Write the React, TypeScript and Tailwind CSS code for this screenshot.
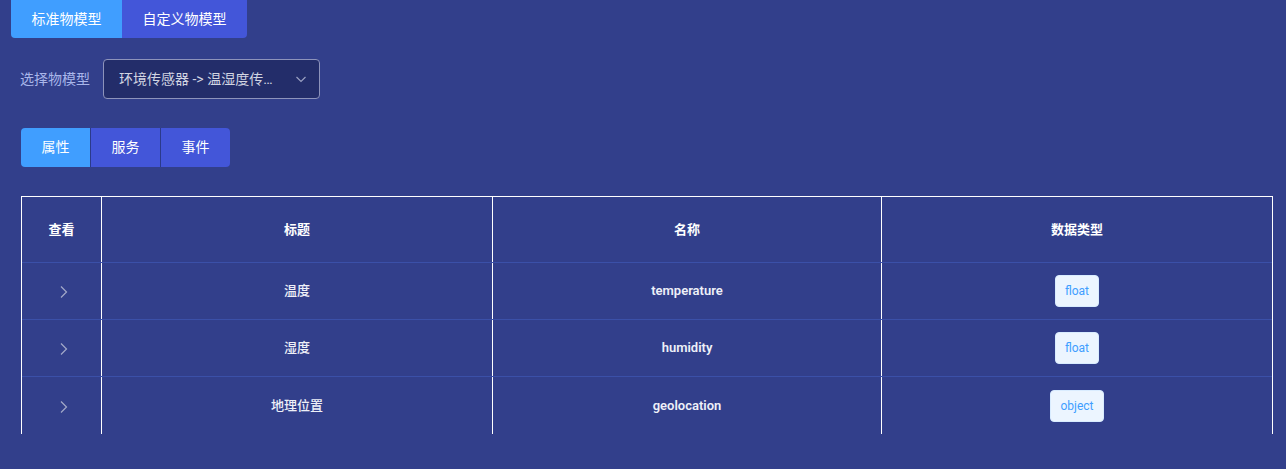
import React from "react";

const rows = [
  { title: "温度", name: "temperature", type: "float" },
  { title: "湿度", name: "humidity", type: "float" },
  { title: "地理位置", name: "geolocation", type: "object" },
];

const font = { fontFamily: "Roboto, 'Noto Sans CJK SC', sans-serif" };

export default function App() {
  return (
    <div className="w-[1286px] h-[469px] overflow-hidden bg-[#323f8b] text-white" style={font}>
      {/* model type switch */}
      <div className="flex pl-[11px]">
        <button className="w-[111px] h-[38px] bg-[#409eff] text-[14px] text-white rounded-bl-[4px]">
          标准物模型
        </button>
        <button className="w-[125px] h-[38px] bg-[#4356d9] text-[14px] text-white rounded-br-[4px]">
          自定义物模型
        </button>
      </div>

      {/* select */}
      <div className="flex items-center mt-[21px] pl-[20px]">
        <span className="text-[14px] text-[#a9b6ea] w-[83px]">选择物模型</span>
        <div className="w-[217px] h-[40px] flex items-center justify-between pl-[15px] pr-[12px] bg-[#232d6a] border border-[#8d93bb] rounded-[4px]">
          <span className="text-[14px] text-[#d2d5e2] truncate">环境传感器 -&gt; 温湿度传…</span>
          <svg width="12" height="12" viewBox="0 0 12 12" fill="none" className="shrink-0">
            <path d="M1.5 4l4.5 4.5L10.5 4" stroke="#9aa0c2" strokeWidth="1.2" />
          </svg>
        </div>
      </div>

      {/* tabs */}
      <div className="flex mt-[29px] ml-[21px] h-[39px] w-[209px] bg-[#2b3a8a] rounded-[4px] overflow-hidden gap-px">
        <div className="w-[69px] flex items-center justify-center bg-[#409eff] text-[14px]">属性</div>
        <div className="w-[69px] flex items-center justify-center bg-[#4356d9] text-[14px]">服务</div>
        <div className="w-[69px] flex items-center justify-center bg-[#4356d9] text-[14px]">事件</div>
      </div>

      {/* table */}
      <div className="mt-[29px] ml-[21px] w-[1252px] border-t border-l border-r border-white">
        <div className="grid grid-cols-[79px_391px_389px_1fr] h-[66px] border-b border-[#3b50a8] text-[13px] font-bold">
          <div className="flex items-center justify-center">查看</div>
          <div className="flex items-center justify-center border-l border-white">标题</div>
          <div className="flex items-center justify-center border-l border-white">名称</div>
          <div className="flex items-center justify-center border-l border-white">数据类型</div>
        </div>
        {rows.map((r, i) => (
          <div
            key={r.name}
            className={`grid grid-cols-[79px_391px_389px_1fr] h-[57px] text-[13px] ${i < rows.length - 1 ? "border-b border-[#3b50a8]" : ""}`}
          >
            <div className="flex items-center justify-center pt-[2px]">
              <svg width="10" height="14" viewBox="0 0 10 14" fill="none" className="ml-[4px]">
                <path d="M2 1.5l5.5 5.5L2 12.5" stroke="#a3a9c9" strokeWidth="1.2" />
              </svg>
            </div>
            <div className="flex items-center justify-center border-l border-white text-[#eef0f8] font-medium">
              {r.title}
            </div>
            <div className="flex items-center justify-center border-l border-white text-[#eef0f8] font-semibold">
              {r.name}
            </div>
            <div className="flex items-center justify-center border-l border-white">
              <span className="h-[32px] px-[9px] flex items-center bg-[#ecf5ff] border border-[#d9ecff] rounded-[4px] text-[12px] text-[#409eff]">
                {r.type}
              </span>
            </div>
          </div>
        ))}
      </div>
    </div>
  );
}
